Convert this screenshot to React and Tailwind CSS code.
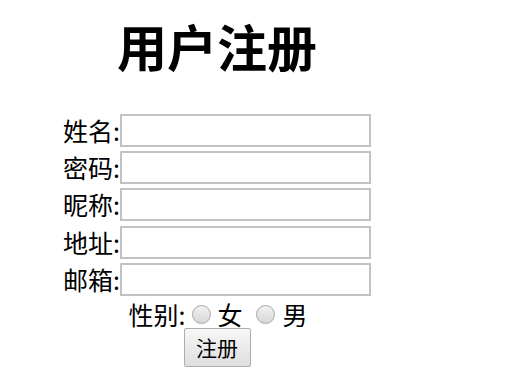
export default function App() {
    const fields = ["姓名", "密码", "昵称", "地址", "邮箱"]

    return (
        <div className="w-[434px] bg-white text-black font-['Noto_Sans_CJK_SC','Noto_Sans',sans-serif]">
            <h1 className="mt-[20px] h-[50px] text-center text-[50px] font-bold leading-[50px]">
                用户注册
            </h1>
            <form className="mt-[43.7px] flex flex-col items-center">
                <div className="grid grid-cols-[57px_251px] gap-y-[4.4px]">
                    {fields.map((f) => (
                        <div key={f} className="contents">
                            <label className="flex h-[33px] items-center justify-end text-[25px] leading-none">
                                {f}:
                            </label>
                            <input
                                type="text"
                                className="h-[33px] w-[251px] border-2 border-[#c2c2c2] bg-white outline-none"
                            />
                        </div>
                    ))}
                </div>
                <div className="mt-[6px] flex h-[24px] items-center pl-[2px] text-[25px] leading-none">
                    <span>性别:</span>
                    <span className="ml-[7px] mr-[6px] h-[19px] w-[19px] rounded-full border border-[#a8a8a8] bg-gradient-to-b from-[#f2f2f2] to-[#d6d6d6]" />
                    <span>女</span>
                    <span className="ml-[14px] mr-[7px] h-[19px] w-[19px] rounded-full border border-[#a8a8a8] bg-gradient-to-b from-[#f2f2f2] to-[#d6d6d6]" />
                    <span>男</span>
                </div>
                <button
                    type="button"
                    className="mt-[2px] h-[39px] w-[67px] rounded-[2px] border border-[#adadad] bg-gradient-to-b from-[#f7f7f7] to-[#dedede] text-[21px] leading-none"
                >
                    注册
                </button>
            </form>
        </div>
    )
}
